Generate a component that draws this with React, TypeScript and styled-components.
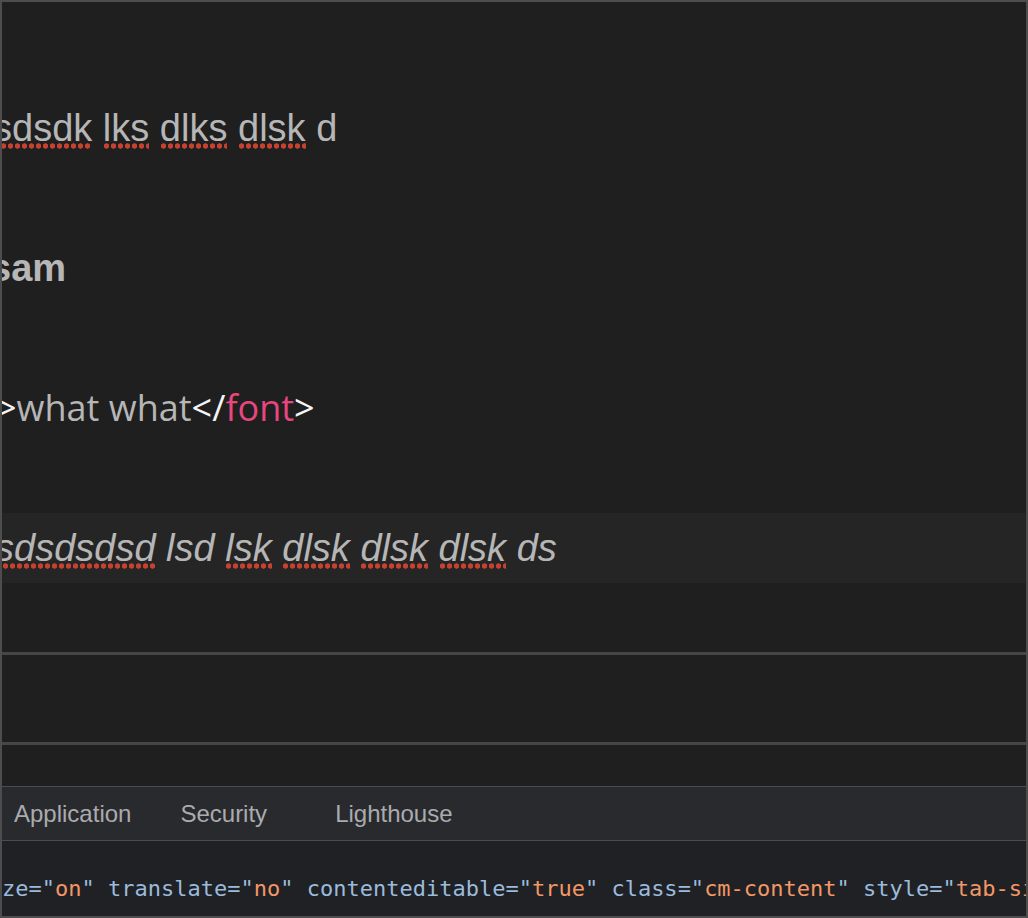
import { createGlobalStyle } from "styled-components";
import styled, { css } from "styled-components";

const GlobalStyle = createGlobalStyle`
  html, body {
    margin: 0;
    padding: 0;
    background: #1f1f1f;
  }
  #root {
    width: 1028px;
    height: 918px;
  }
`;

const Frame = styled.div`
  box-sizing: border-box;
  width: 1028px;
  height: 918px;
  border: 2px solid #4d4d4d;
  background: #1f1f1f;
  display: flex;
  flex-direction: column;
  overflow: hidden;
`;

const Editor = styled.div`
  height: 650px;
  flex-shrink: 0;
  box-sizing: border-box;
  padding-top: 91px;
  display: flex;
  flex-direction: column;
  gap: 70px;
  overflow: hidden;
`;

const EditorLine = styled.div<{ $active?: boolean; $bold?: boolean; $italic?: boolean }>`
  height: 70px;
  line-height: 70px;
  white-space: nowrap;
  overflow: hidden;
  text-indent: -9px;
  font-family: "Liberation Sans", Arial, sans-serif;
  font-size: 38px;
  color: #b6b6b6;

  ${(p) =>
    p.$bold &&
    css`
      font-weight: bold;
      text-indent: -12px;
    `}
  ${(p) =>
    p.$italic &&
    css`
      font-style: italic;
      text-indent: -7px;
    `}
  ${(p) =>
    p.$active &&
    css`
      background: #252525;
    `}
`;

const HtmlLine = styled(EditorLine)`
  font-family: "Open Sans", sans-serif;
  font-size: 36px;
  text-indent: -6px;
`;

const Misspelled = styled.span`
  background-image: radial-gradient(circle at center, #c8412f 2.4px, transparent 2.9px);
  background-size: 7px 6px;
  background-repeat: repeat-x;
  background-position: left bottom;
`;

const Tag = styled.span<{ $name?: boolean }>`
  color: ${(p) => (p.$name ? "#e8467f" : "#f4f4f4")};
`;

const Divider = styled.div`
  height: 3px;
  flex-shrink: 0;
  background: #464646;
`;

const Blank = styled.div<{ $h: number }>`
  height: ${(p) => p.$h}px;
  flex-shrink: 0;
`;

const TabBar = styled.div`
  height: 53px;
  flex-shrink: 0;
  display: flex;
  align-items: center;
  background: #292a2d;
  border-top: 1px solid #4a4c50;
  border-bottom: 1px solid #4a4c50;
  font-family: "Liberation Sans", Arial, sans-serif;
  font-size: 24px;
  color: #a9abae;
`;

const Tab = styled.div<{ $shift?: number }>`
  padding: 0 24px;
  margin-left: ${(p) => p.$shift ?? 0}px;
  white-space: nowrap;
`;

const CodeArea = styled.div`
  flex: 1;
  background: #202124;
  box-sizing: border-box;
  padding-top: 35px;
  white-space: pre;
  overflow: hidden;
  font-family: "DejaVu Sans Mono", "Liberation Mono", monospace;
  font-size: 22px;
  line-height: 26px;
  color: #9bbbdc;
`;

const AttrValue = styled.span`
  color: #f29766;
`;

const attrs: [string, string][] = [
  ["ze", "on"],
  ["translate", "no"],
  ["contenteditable", "true"],
  ["class", "cm-content"],
  ["style", "tab-size: 4;"],
];

export default function App() {
  return (
    <>
      <GlobalStyle />
      <Frame>
        <Editor>
          <EditorLine>
            <Misspelled>sdsdk</Misspelled> <Misspelled>lks</Misspelled>{" "}
            <Misspelled>dlks</Misspelled> <Misspelled>dlsk</Misspelled> d
          </EditorLine>
          <EditorLine $bold>sam</EditorLine>
          <HtmlLine>
            <Tag>&gt;</Tag>what what<Tag>&lt;/</Tag>
            <Tag $name>font</Tag>
            <Tag>&gt;</Tag>
          </HtmlLine>
          <EditorLine $italic $active>
            <Misspelled>sdsdsdsd</Misspelled> lsd <Misspelled>lsk</Misspelled>{" "}
            <Misspelled>dlsk</Misspelled> <Misspelled>dlsk</Misspelled>{" "}
            <Misspelled>dlsk</Misspelled> ds
          </EditorLine>
        </Editor>
        <Divider />
        <Blank $h={87} />
        <Divider />
        <Blank $h={41} />
        <TabBar>
          <Tab $shift={-12}>Application</Tab>
          <Tab $shift={1}>Security</Tab>
          <Tab $shift={20}>Lighthouse</Tab>
        </TabBar>
        <CodeArea>
          {attrs.map(([name, value], i) => (
            <span key={name}>
              {i > 0 ? " " : ""}
              {name}="<AttrValue>{value}</AttrValue>"
            </span>
          ))}
        </CodeArea>
      </Frame>
    </>
  );
}
